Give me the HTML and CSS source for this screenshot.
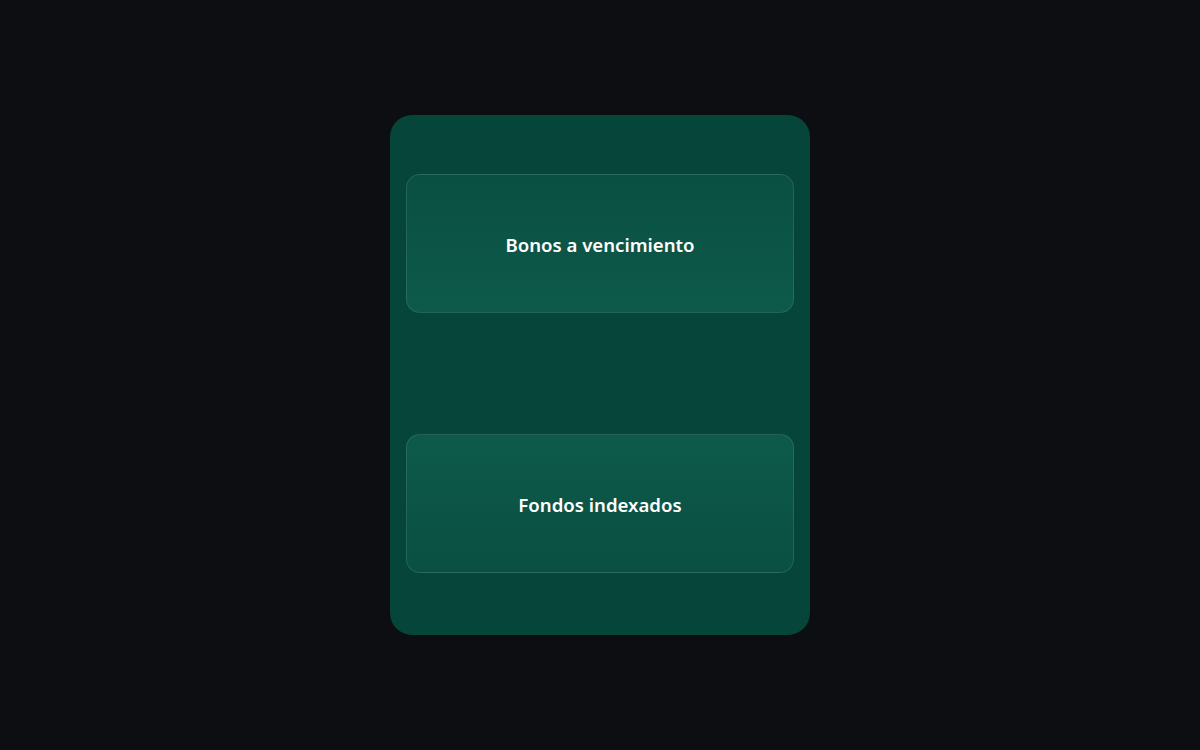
FILE: index.html
```html
<!DOCTYPE html>
<html lang="es">
<head>
<meta charset="utf-8">
<title>Opciones</title>
<link rel="stylesheet" href="styles.css">
</head>
<body>
<main class="card">
  <div class="slot">
    <button class="option option-up">Bonos a vencimiento</button>
  </div>
  <div class="slot">
    <button class="option option-down">Fondos indexados</button>
  </div>
</main>
</body>
</html>
```
FILE: styles.css
```css
html, body {
  margin: 0;
  padding: 0;
}
body {
  background: #0c0e11;
  min-height: 100vh;
  display: flex;
  align-items: center;
  justify-content: center;
  font-family: "Noto Sans", "Open Sans", sans-serif;
}
.card {
  width: 420px;
  height: 520px;
  box-sizing: border-box;
  padding: 0 16px;
  background: #05453a;
  border-radius: 22px;
  display: grid;
  grid-template-rows: 1fr 1fr;
}
.slot {
  display: flex;
  align-items: center;
  padding-bottom: 3px;
}
.option {
  width: 100%;
  height: 139px;
  box-sizing: border-box;
  padding: 2px 0 0;
  border: 1.5px solid rgba(255, 255, 255, 0.11);
  border-radius: 14px;
  color: #ffffff;
  font-family: inherit;
  font-size: 18.6px;
  font-weight: 600;
  cursor: pointer;
}
.option-up {
  background: linear-gradient(180deg, #0a4f42 0%, #0d5a4b 100%);
}
.option-down {
  background: linear-gradient(180deg, #0d5a4b 0%, #0a4f42 100%);
}
```
